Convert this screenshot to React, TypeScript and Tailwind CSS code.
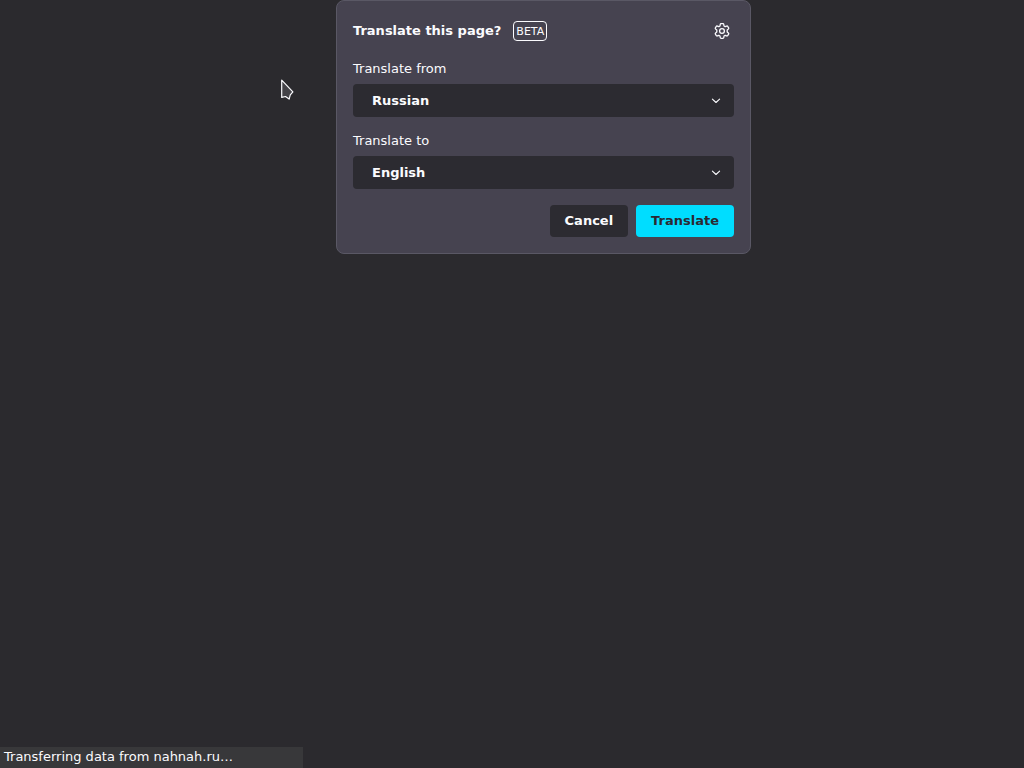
import React, { useState } from "react";

const LANGUAGES = ["English", "French", "German", "Russian", "Spanish"];

interface LanguageSelectProps {
  id: string;
  label: string;
  value: string;
  onChange: (value: string) => void;
}

const GearIcon: React.FC = () => (
  <svg
    viewBox="0 0 16 16"
    className="w-4 h-4"
    fill="none"
    stroke="currentColor"
    strokeWidth="1.3"
    strokeLinejoin="round"
    aria-hidden="true"
  >
    <path d="M6.2 1.5Q6.3.7 7.1.7h1.8q.8 0 .9.8l.2 1.5 1.2.7 1.4-.6q.8-.3 1.2.4l.8 1.4q.4.7-.2 1.2L13.2 7v2l1.2.9q.6.5.2 1.2l-.8 1.4q-.4.7-1.2.4l-1.4-.6-1.2.7-.2 1.5q-.1.8-.9.8H7.1q-.8 0-.9-.8L6 13l-1.2-.7-1.4.6q-.8.3-1.2-.4l-.8-1.4q-.4-.7.2-1.2L2.8 9V7l-1.2-.9Q1 5.6 1.4 4.9l.8-1.4q.4-.7 1.2-.4l1.4.6L6 3z" />
    <circle cx="8" cy="8" r="2.4" />
  </svg>
);

const LanguageSelect: React.FC<LanguageSelectProps> = ({ id, label, value, onChange }) => (
  <div className="flex flex-col gap-[5px]">
    <label htmlFor={id} className="leading-5">
      {label}
    </label>
    <div className="relative">
      <select
        id={id}
        value={value}
        onChange={(e) => onChange(e.target.value)}
        className="block w-full h-[33px] pl-[19px] pr-8 rounded bg-[#2c2b31] font-bold appearance-none"
      >
        {LANGUAGES.map((lang) => (
          <option key={lang}>{lang}</option>
        ))}
      </select>
      <svg
        viewBox="0 0 10 16"
        className="absolute inset-y-0 right-[13px] w-[10px] h-full pointer-events-none"
        fill="none"
        stroke="currentColor"
        strokeWidth="1.1"
        strokeLinecap="round"
        strokeLinejoin="round"
        aria-hidden="true"
      >
        <path d="M1.4 6.6 5 10 8.6 6.6" />
      </svg>
    </div>
  </div>
);

export default function App() {
  const [from, setFrom] = useState("Russian");
  const [to, setTo] = useState("English");

  return (
    <div className="relative min-h-screen flex flex-col justify-between items-start bg-[#2b2a2e] text-[#fbfbfe] text-[13px] font-['DejaVu_Sans',sans-serif]">
      <form
        onSubmit={(e) => e.preventDefault()}
        className="ml-84 w-full max-w-[415px] flex flex-col gap-[14px] p-4 rounded-lg border border-[#5a5865] bg-[#464350]"
      >
        <div className="h-7 flex items-center justify-between pr-1">
          <div className="flex items-center gap-3">
            <h1 className="font-bold">Translate this page?</h1>
            <span className="px-0.5 h-5 flex items-center rounded border border-current text-[11px] leading-none">
              BETA
            </span>
          </div>
          <button type="button" aria-label="Translation settings">
            <GearIcon />
          </button>
        </div>

        <LanguageSelect id="lang-from" label="Translate from" value={from} onChange={setFrom} />
        <LanguageSelect id="lang-to" label="Translate to" value={to} onChange={setTo} />

        <div className="flex justify-end gap-2 pt-0.5 font-bold">
          <button type="button" className="h-8 px-[15px] rounded bg-[#2c2b31]">
            Cancel
          </button>
          <button type="submit" className="h-8 px-[15px] rounded bg-[#00ddff] text-[#2b2a33]">
            Translate
          </button>
        </div>
      </form>

      <div role="status" className="w-full max-w-[303px] h-[21px] px-1 leading-5 bg-[#38383a]">
        Transferring data from nahnah.ru…
      </div>

      {/* mouse pointer */}
      <svg
        viewBox="0 0 14 22"
        className="absolute left-[280px] top-[79px] w-[14px] h-[22px]"
        fill="#434247"
        stroke="#fbfbfe"
        strokeWidth="1.2"
        strokeLinejoin="round"
        aria-hidden="true"
      >
        <path d="M1.7 1.2v17.2l3.8-.9 3.6 2.6 1.2-4.2 2.6-3z" />
      </svg>
    </div>
  );
}
